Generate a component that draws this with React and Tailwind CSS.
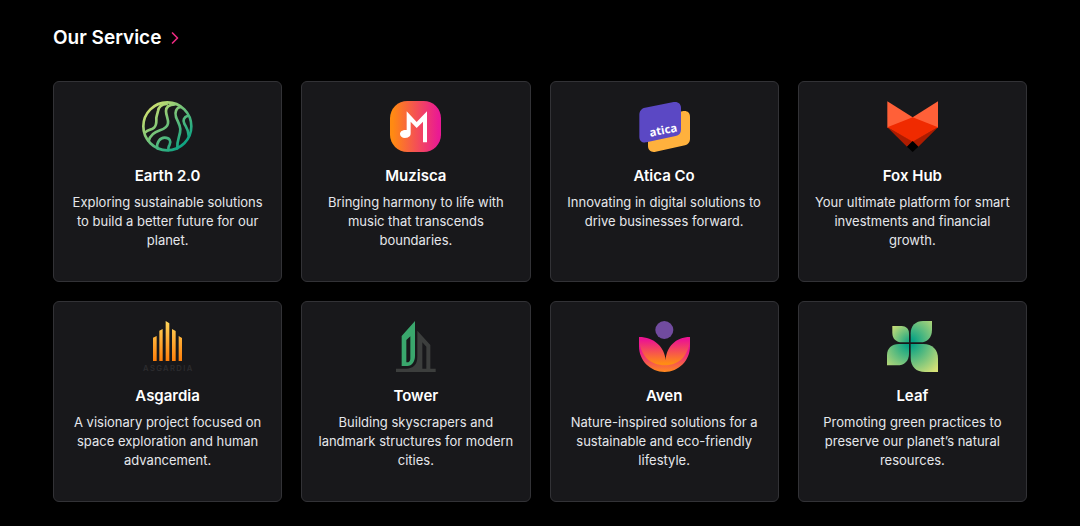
import React from 'react';
import { ChevronRight } from 'lucide-react';

const EarthLogo = () => (
  <svg viewBox="0 0 153 153" className="size-full" fill="none" aria-hidden="true">
    <defs>
      <linearGradient id="earth" x1="20" y1="20" x2="125" y2="130" gradientUnits="userSpaceOnUse">
        <stop offset="0" stopColor="#cfe070" />
        <stop offset="0.5" stopColor="#6cc07a" />
        <stop offset="1" stopColor="#0fa483" />
      </linearGradient>
    </defs>
    <g stroke="url(#earth)" strokeWidth="8" strokeLinecap="round">
      <circle cx="76" cy="76" r="72" />
      <path d="M74 9C58 10 50 18 48 30C46 40 44 44 43 51C43 65 45 72 36 80C28 87 18 86 10 94" />
      <path d="M98 10C84 11 72 17 72 30C72 44 80 54 78 67C76 80 66 84 54 88C38 93 24 104 20 120" />
      <path d="M116 18C102 20 98 34 102 48C106 60 114 70 115 84C116 102 104 116 106 142" />
      <path d="M138 44C125 48 122 58 127 68C132 78 139 84 140 104" />
      <path d="M46 142C43 124 54 110 68 110C83 110 88 121 83 131C79 138 78 142 80 147" />
    </g>
  </svg>
);

const MuziscaLogo = () => (
  <svg viewBox="0 0 153 153" className="size-full" aria-hidden="true">
    <defs>
      <linearGradient id="muzisca" x1="0" y1="0" x2="1" y2="0">
        <stop offset="0.05" stopColor="#ff8a12" />
        <stop offset="0.95" stopColor="#ea1a93" />
      </linearGradient>
    </defs>
    <rect width="153" height="153" rx="52" fill="url(#muzisca)" />
    <path
      d="M50 31L80 63L111 31V124H99V62L80 81L62 62V97C62 107 54 111 45 111C36 111 30 106 30 99C30 91 38 86 50 87Z"
      fill="#fff"
    />
  </svg>
);

const AticaLogo = () => (
  <svg viewBox="0 0 153 153" className="size-full" aria-hidden="true">
    <path
      d="M46 50L130 31C144 28 153 35 153 47V115C153 124 147 131 138 133L50 152C37 155 27 148 27 135V72C27 60 35 52 46 50Z"
      fill="#ffb13d"
    />
    <path
      d="M18 20L104 3C117 1 126 8 126 20V86C126 96 120 103 110 105L22 124C9 126 1 119 1 107V41C1 30 8 22 18 20Z"
      fill="#5b48c4"
    />
    <text
      x="34"
      y="107"
      fill="#fff"
      transform="rotate(-11 34 107)"
      className="font-['Open_Sans',sans-serif] text-[34px] font-bold"
    >
      atica
    </text>
  </svg>
);

const FoxLogo = () => (
  <svg viewBox="0 0 153 153" className="size-full" aria-hidden="true">
    <path d="M1 1L77 49V80L1 80Z" fill="#ff6038" />
    <path d="M153 1L77 49V80L153 80Z" fill="#ff6038" />
    <path d="M1 79L60 137L77 121Z" fill="#ad1c00" />
    <path d="M153 79L94 137L77 121Z" fill="#ad1c00" />
    <path d="M77 49L153 79L77 122L1 79Z" fill="#f02a00" />
    <path d="M77 120L94 137L77 153L60 137Z" fill="#000" />
  </svg>
);

const AsgardiaLogo = () => (
  <svg viewBox="0 0 153 153" className="size-full overflow-visible" aria-hidden="true">
    <defs>
      <linearGradient id="asgardia" x1="0" y1="0" x2="0" y2="120" gradientUnits="userSpaceOnUse">
        <stop offset="0" stopColor="#ffd65c" />
        <stop offset="1" stopColor="#ff7f0a" />
      </linearGradient>
    </defs>
    <path
      d="M33 50L44 45V120H33ZM52 29L62 24V120H52ZM71 0L82 7V120H71ZM90 24L101 30V120H90ZM110 45L120 51V120H110Z"
      fill="url(#asgardia)"
    />
    <text
      x="79"
      y="151"
      textAnchor="middle"
      fill="#2c2c2f"
      className="font-['Inter',sans-serif] text-[23px] font-semibold tracking-[4px]"
    >
      ASGARDIA
    </text>
  </svg>
);

const TowerLogo = () => (
  <svg viewBox="0 0 153 153" className="size-full" aria-hidden="true">
    <path
      d="M35 45L75 0V104C75 122 66 134 52 135H35ZM49 57V124H55C60 121 61 117 61 112V46Z"
      fill="#3aa76d"
      fillRule="evenodd"
    />
    <path
      d="M82 29L121 72V143H137V153H18V143H48C70 143 82 130 82 108ZM97 64V143H109V77Z"
      fill="#3c3e3d"
      fillRule="evenodd"
    />
  </svg>
);

const AvenLogo = () => (
  <svg viewBox="0 0 153 153" className="size-full" aria-hidden="true">
    <defs>
      <linearGradient id="avenPetal" x1="0" y1="48" x2="0" y2="136" gradientUnits="userSpaceOnUse">
        <stop offset="0.1" stopColor="#ec1590" />
        <stop offset="0.9" stopColor="#ff8c14" />
      </linearGradient>
      <linearGradient id="avenBase" x1="0" y1="48" x2="0" y2="153" gradientUnits="userSpaceOnUse">
        <stop offset="0.4" stopColor="#ea1592" />
        <stop offset="1" stopColor="#ff8a1c" />
      </linearGradient>
    </defs>
    <circle cx="76" cy="27" r="27" fill="#714b9f" />
    <path d="M0 48V76C0 119 34 153 77 153C119 153 153 119 153 76V48L80 118Z" fill="url(#avenBase)" />
    <path
      d="M0 48C45 48 77 78 80 118C82 78 110 48 153 48C153 100 122 133 78 133C32 133 0 100 0 48Z"
      fill="url(#avenPetal)"
    />
  </svg>
);

const LeafLogo = () => (
  <svg viewBox="0 0 153 153" className="size-full" aria-hidden="true">
    <defs>
      <radialGradient id="leaf" cx="69" cy="65" r="112" gradientUnits="userSpaceOnUse">
        <stop offset="0.1" stopColor="#08a284" />
        <stop offset="1" stopColor="#d6e177" />
      </radialGradient>
      <radialGradient id="leafSmall" cx="69" cy="65" r="76" gradientUnits="userSpaceOnUse">
        <stop offset="0.1" stopColor="#20a881" />
        <stop offset="1" stopColor="#d6e177" />
      </radialGradient>
    </defs>
    <path
      d="M16 15H44C57 15 66 24 66 37V64H45C27 64 16 53 16 36Z"
      fill="url(#leafSmall)"
    />
    <path d="M135 0V26C135 50 121 64 100 64H71V37C71 14 86 0 108 0Z" fill="url(#leaf)" />
    <path d="M66 69V98C66 120 52 133 30 133H0V103C0 82 14 69 36 69Z" fill="url(#leaf)" />
    <path d="M71 69H109C136 69 153 86 153 112V153H114C88 153 71 137 71 110Z" fill="url(#leaf)" />
  </svg>
);

const services = [
  {
    title: 'Earth 2.0',
    description: 'Exploring sustainable solutions to build a better future for our planet.',
    Logo: EarthLogo,
  },
  {
    title: 'Muzisca',
    description: 'Bringing harmony to life with music that transcends boundaries.',
    Logo: MuziscaLogo,
  },
  {
    title: 'Atica Co',
    description: 'Innovating in digital solutions to drive businesses forward.',
    Logo: AticaLogo,
  },
  {
    title: 'Fox Hub',
    description: 'Your ultimate platform for smart investments and financial growth.',
    Logo: FoxLogo,
  },
  {
    title: 'Asgardia',
    description: 'A visionary project focused on space exploration and human advancement.',
    Logo: AsgardiaLogo,
  },
  {
    title: 'Tower',
    description: 'Building skyscrapers and landmark structures for modern cities.',
    Logo: TowerLogo,
  },
  {
    title: 'Aven',
    description: 'Nature-inspired solutions for a sustainable and eco-friendly lifestyle.',
    Logo: AvenLogo,
  },
  {
    title: 'Leaf',
    description: 'Promoting green practices to preserve our planet’s natural resources.',
    Logo: LeafLogo,
  },
];

const ServiceCard = ({ title, description, Logo }) => (
  <article className="flex min-h-[201px] flex-col items-center rounded-md border border-[#323236] bg-[#18181b] px-3.5 py-[19px] text-center">
    <div className="size-[51px]">
      <Logo />
    </div>
    <h3 className="mt-3 text-[15px] leading-6 font-semibold text-white">{title}</h3>
    <p className="mt-[5px] text-[13px] leading-[19px] text-gray-200">{description}</p>
  </article>
);

const App = () => {
  return (
    <main className="min-h-screen bg-black px-[53px] pt-[25px] pb-6 font-['Inter',sans-serif]">
      <h2 className="mb-[30px] flex items-center gap-1 text-[19px] leading-[26px] font-semibold text-white">
        Our Service
        <ChevronRight className="size-5 text-[#ec2a80]" strokeWidth={2} aria-hidden="true" />
      </h2>

      {/* Services Grid */}
      <section className="grid grid-cols-2 gap-[19px] md:grid-cols-4">
        {services.map((service) => (
          <ServiceCard key={service.title} {...service} />
        ))}
      </section>
    </main>
  );
};

export default App;
